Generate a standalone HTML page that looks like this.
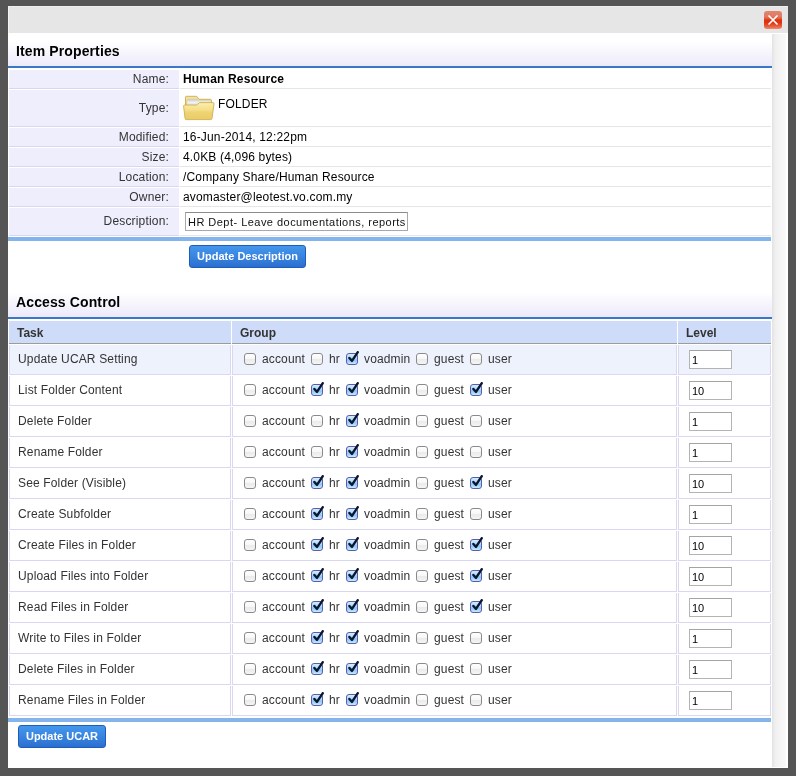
<!DOCTYPE html>
<html><head><meta charset="utf-8">
<style>
html,body{margin:0;padding:0}
body>div,body>svg{will-change:transform}
body{width:796px;height:776px;background:#555;position:relative;overflow:hidden;font-family:"Liberation Sans",sans-serif;font-size:12px}
div{position:absolute;box-sizing:border-box}
.dlg{left:8px;top:6px;width:780px;height:762px;background:#fff}
.topbar{left:8px;top:6px;width:780px;height:27px;background:#e6e6e6;border-top:1px solid #efefef;border-left:1px solid #f4f4f4}
.close{left:764px;top:11px;width:18px;height:18px;border-radius:3px;background:linear-gradient(#e4846c 0%,#de7c64 30%,#e25a3c 42%,#e0300f 50%,#de3514 65%,#e65f3f 85%,#ee8a6e 100%)}
.scroll{left:772px;top:34px;width:15px;height:733px;background:linear-gradient(to right,#e2e2e2,#efefef 20%,#f6f6f6 60%,#f9f9f9 93%,#fff 93%)}
.sechead{left:8px;width:764px;height:33px;background:linear-gradient(#fff 0%,#fff 25%,#eceafa 100%)}
.sechead span{position:absolute;left:8px;font-weight:bold;font-size:14px;color:#000;line-height:16px;letter-spacing:0.12px}
.blue{left:8px;width:764px;height:2px;background:#3a77c6}
.lblue{left:8px;width:763px;height:4px;background:#85b4ec}
.plab{left:9px;width:170px;background:#efeefc;border-bottom:1px solid #d9d6ef;text-align:right;padding-right:10px;color:#333}
.pval{left:180px;width:591px;background:#fff;border-bottom:1px solid #e6e6e6;color:#000;padding-left:3px}
.plab span,.pval span{position:absolute;line-height:14px;letter-spacing:0.17px;white-space:nowrap}
.btn{height:23px;border:1px solid #1f5cb8;border-radius:3px;background:linear-gradient(#4397ec 0%,#3a86e2 45%,#2b6fd0 100%);color:#fff;font-weight:bold;font-size:11px;line-height:21px;text-align:center}
.th{top:321px;height:23px;background:#cfdcf9;border-bottom:1px solid #9c9c9c;font-weight:bold;color:#333}
.th span{position:absolute;left:8px;top:5px;line-height:14px}
.cell{height:30px;border:1px solid #dad8f0;border-top:none}
.t{line-height:14px;color:#333;white-space:nowrap;letter-spacing:0.15px}
.cb{position:absolute}
.lvl{width:43px;height:19px;border:1px solid #b4b4b4;border-top-color:#a4a4a4;background:#fff;color:#000;padding-left:2px;padding-top:3px;line-height:13px;font-size:11px}
.inp{left:185px;top:212px;width:223px;height:19px;border:1px solid #a8a8a8;border-top-color:#8c8c8c;background:#fff;padding-left:2px;padding-top:3px;line-height:13px;font-size:11px;letter-spacing:0.47px;white-space:nowrap;overflow:hidden;color:#111}
</style></head><body>
<svg width="0" height="0" style="position:absolute">
<defs>
<linearGradient id="gu" x1="0" y1="0" x2="0" y2="1"><stop offset="0" stop-color="#fff"/><stop offset="0.45" stop-color="#f8f8f8"/><stop offset="0.55" stop-color="#ebebeb"/><stop offset="1" stop-color="#f6f6f6"/></linearGradient>
<linearGradient id="gc" x1="0" y1="0" x2="0" y2="1"><stop offset="0" stop-color="#d6f0ff"/><stop offset="0.45" stop-color="#a8d8fb"/><stop offset="0.6" stop-color="#8cc6f6"/><stop offset="1" stop-color="#cdf0ff"/></linearGradient>
<g id="unchk"><rect x="1.5" y="1.5" width="11" height="11" rx="2.5" fill="url(#gu)" stroke="#8a8a8a" stroke-width="1"/></g>
<g id="chk"><rect x="1.5" y="1.5" width="11" height="11" rx="2.5" fill="url(#gc)" stroke="#5c5cae" stroke-width="1"/><path d="M4.4 6 L7 8.9 L12.8 0.2" fill="none" stroke="#0b1630" stroke-width="2.4" stroke-linecap="round" stroke-linejoin="round"/></g>
</defs></svg>
<div class="dlg"></div>
<div class="topbar"></div>
<div class="close"><svg width="18" height="18" style="position:absolute;left:0;top:0"><path d="M5 5 L13 13 M13 5 L5 13" stroke="#fff" stroke-width="1.7" stroke-linecap="round"/></svg></div>
<div class="scroll"></div>

<div class="sechead" style="top:33px"><span style="top:10px">Item Properties</span></div>
<div class="blue" style="top:66px"></div>

<div class="plab" style="top:70px;height:19px"><span style="right:10px;top:2px">Name:</span></div>
<div class="pval" style="top:70px;height:19px"><span style="left:3px;top:2px;font-weight:bold">Human Resource</span></div>
<div class="plab" style="top:90px;height:37px"><span style="right:10px;top:11px">Type:</span></div>
<div class="pval" style="top:90px;height:37px">
<svg style="position:absolute;left:3px;top:4px" width="34" height="30" viewBox="0 0 34 30">
<defs>
<linearGradient id="fb" x1="0" y1="0" x2="0" y2="1"><stop offset="0" stop-color="#f6e69c"/><stop offset="1" stop-color="#e2c35a"/></linearGradient>
<linearGradient id="ff" x1="0" y1="0" x2="0" y2="1"><stop offset="0" stop-color="#fbefb0"/><stop offset="0.45" stop-color="#f4de86"/><stop offset="0.55" stop-color="#efd474"/><stop offset="1" stop-color="#e9cc66"/></linearGradient>
<linearGradient id="fp" x1="0" y1="0" x2="0" y2="1"><stop offset="0" stop-color="#c8c8c8"/><stop offset="0.5" stop-color="#f2f2f2"/><stop offset="1" stop-color="#d8d8d8"/></linearGradient>
</defs>
<path d="M2.5 3.2 Q2.5 2.3 3.5 2.3 L13.6 2.3 L16.1 5.3 L27.2 5.3 Q28.5 5.3 28.5 6.5 L28.5 14 L2.5 14 Z" fill="url(#fb)" stroke="#cdaa52" stroke-width="0.9"/>
<path d="M4.3 5 L13.8 5 L15.8 6.4 L27.9 6.4 L27.9 12 L4.3 12 Z" fill="url(#fp)"/>
<path d="M1.6 11 L13.6 11 L16.6 8.6 L30.2 8.6 Q31.2 8.6 31 9.8 L29 24.6 Q28.8 25.6 27.8 25.6 L3 25.6 Q2.2 25.6 2.1 24.6 L0.6 12.2 Q0.5 11 1.6 11 Z" fill="url(#ff)" stroke="#cfae58" stroke-width="0.9"/>
</svg>
<span style="left:38px;top:7px">FOLDER</span></div>
<div class="plab" style="top:128px;height:19px"><span style="right:10px;top:2px">Modified:</span></div>
<div class="pval" style="top:128px;height:19px"><span style="left:3px;top:2px">16-Jun-2014, 12:22pm</span></div>
<div class="plab" style="top:148px;height:19px"><span style="right:10px;top:2px">Size:</span></div>
<div class="pval" style="top:148px;height:19px"><span style="left:3px;top:2px">4.0KB (4,096 bytes)</span></div>
<div class="plab" style="top:168px;height:19px"><span style="right:10px;top:2px">Location:</span></div>
<div class="pval" style="top:168px;height:19px"><span style="left:3px;top:2px">/Company Share/Human Resource</span></div>
<div class="plab" style="top:188px;height:19px"><span style="right:10px;top:2px">Owner:</span></div>
<div class="pval" style="top:188px;height:19px"><span style="left:3px;top:2px">avomaster@leotest.vo.com.my</span></div>
<div class="plab" style="top:208px;height:28px"><span style="right:10px;top:6px">Description:</span></div>
<div class="pval" style="top:208px;height:28px"></div>
<div class="inp">HR Dept- Leave documentations, reports</div>
<div class="lblue" style="top:237px"></div>
<div class="btn" style="left:189px;top:245px;width:117px">Update Description</div>

<div class="sechead" style="top:284px"><span style="top:10px">Access Control</span></div>
<div class="blue" style="top:317px"></div>
<div class="th" style="left:9px;width:222px"><span>Task</span></div>
<div class="th" style="left:232px;width:445px"><span>Group</span></div>
<div class="th" style="left:678px;width:93px"><span>Level</span></div>
<div class="cell" style="left:9px;top:345px;width:222px;background:#eef2fd"></div>
<div class="cell" style="left:232px;top:345px;width:445px;background:#eef2fd"></div>
<div class="cell" style="left:678px;top:345px;width:93px;background:#eef2fd"></div>
<div class="t" style="left:18px;top:352px">Update UCAR Setting</div>
<svg class="cb" style="left:243px;top:352px" width="14" height="14" viewBox="0 0 14 14"><use href="#unchk"/></svg>
<div class="t" style="left:262px;top:352px">account</div>
<svg class="cb" style="left:310px;top:352px" width="14" height="14" viewBox="0 0 14 14"><use href="#unchk"/></svg>
<div class="t" style="left:329px;top:352px">hr</div>
<svg class="cb" style="left:345px;top:352px" width="14" height="14" viewBox="0 0 14 14" overflow="visible"><use href="#chk"/></svg>
<div class="t" style="left:364px;top:352px">voadmin</div>
<svg class="cb" style="left:415px;top:352px" width="14" height="14" viewBox="0 0 14 14"><use href="#unchk"/></svg>
<div class="t" style="left:434px;top:352px">guest</div>
<svg class="cb" style="left:469px;top:352px" width="14" height="14" viewBox="0 0 14 14"><use href="#unchk"/></svg>
<div class="t" style="left:488px;top:352px">user</div>
<div class="lvl" style="left:689px;top:350px">1</div>
<div class="cell" style="left:9px;top:376px;width:222px;background:#fff"></div>
<div class="cell" style="left:232px;top:376px;width:445px;background:#fff"></div>
<div class="cell" style="left:678px;top:376px;width:93px;background:#fff"></div>
<div class="t" style="left:18px;top:383px">List Folder Content</div>
<svg class="cb" style="left:243px;top:383px" width="14" height="14" viewBox="0 0 14 14"><use href="#unchk"/></svg>
<div class="t" style="left:262px;top:383px">account</div>
<svg class="cb" style="left:310px;top:383px" width="14" height="14" viewBox="0 0 14 14" overflow="visible"><use href="#chk"/></svg>
<div class="t" style="left:329px;top:383px">hr</div>
<svg class="cb" style="left:345px;top:383px" width="14" height="14" viewBox="0 0 14 14" overflow="visible"><use href="#chk"/></svg>
<div class="t" style="left:364px;top:383px">voadmin</div>
<svg class="cb" style="left:415px;top:383px" width="14" height="14" viewBox="0 0 14 14"><use href="#unchk"/></svg>
<div class="t" style="left:434px;top:383px">guest</div>
<svg class="cb" style="left:469px;top:383px" width="14" height="14" viewBox="0 0 14 14" overflow="visible"><use href="#chk"/></svg>
<div class="t" style="left:488px;top:383px">user</div>
<div class="lvl" style="left:689px;top:381px">10</div>
<div class="cell" style="left:9px;top:407px;width:222px;background:#fff"></div>
<div class="cell" style="left:232px;top:407px;width:445px;background:#fff"></div>
<div class="cell" style="left:678px;top:407px;width:93px;background:#fff"></div>
<div class="t" style="left:18px;top:414px">Delete Folder</div>
<svg class="cb" style="left:243px;top:414px" width="14" height="14" viewBox="0 0 14 14"><use href="#unchk"/></svg>
<div class="t" style="left:262px;top:414px">account</div>
<svg class="cb" style="left:310px;top:414px" width="14" height="14" viewBox="0 0 14 14"><use href="#unchk"/></svg>
<div class="t" style="left:329px;top:414px">hr</div>
<svg class="cb" style="left:345px;top:414px" width="14" height="14" viewBox="0 0 14 14" overflow="visible"><use href="#chk"/></svg>
<div class="t" style="left:364px;top:414px">voadmin</div>
<svg class="cb" style="left:415px;top:414px" width="14" height="14" viewBox="0 0 14 14"><use href="#unchk"/></svg>
<div class="t" style="left:434px;top:414px">guest</div>
<svg class="cb" style="left:469px;top:414px" width="14" height="14" viewBox="0 0 14 14"><use href="#unchk"/></svg>
<div class="t" style="left:488px;top:414px">user</div>
<div class="lvl" style="left:689px;top:412px">1</div>
<div class="cell" style="left:9px;top:438px;width:222px;background:#fff"></div>
<div class="cell" style="left:232px;top:438px;width:445px;background:#fff"></div>
<div class="cell" style="left:678px;top:438px;width:93px;background:#fff"></div>
<div class="t" style="left:18px;top:445px">Rename Folder</div>
<svg class="cb" style="left:243px;top:445px" width="14" height="14" viewBox="0 0 14 14"><use href="#unchk"/></svg>
<div class="t" style="left:262px;top:445px">account</div>
<svg class="cb" style="left:310px;top:445px" width="14" height="14" viewBox="0 0 14 14"><use href="#unchk"/></svg>
<div class="t" style="left:329px;top:445px">hr</div>
<svg class="cb" style="left:345px;top:445px" width="14" height="14" viewBox="0 0 14 14" overflow="visible"><use href="#chk"/></svg>
<div class="t" style="left:364px;top:445px">voadmin</div>
<svg class="cb" style="left:415px;top:445px" width="14" height="14" viewBox="0 0 14 14"><use href="#unchk"/></svg>
<div class="t" style="left:434px;top:445px">guest</div>
<svg class="cb" style="left:469px;top:445px" width="14" height="14" viewBox="0 0 14 14"><use href="#unchk"/></svg>
<div class="t" style="left:488px;top:445px">user</div>
<div class="lvl" style="left:689px;top:443px">1</div>
<div class="cell" style="left:9px;top:469px;width:222px;background:#fff"></div>
<div class="cell" style="left:232px;top:469px;width:445px;background:#fff"></div>
<div class="cell" style="left:678px;top:469px;width:93px;background:#fff"></div>
<div class="t" style="left:18px;top:476px">See Folder (Visible)</div>
<svg class="cb" style="left:243px;top:476px" width="14" height="14" viewBox="0 0 14 14"><use href="#unchk"/></svg>
<div class="t" style="left:262px;top:476px">account</div>
<svg class="cb" style="left:310px;top:476px" width="14" height="14" viewBox="0 0 14 14" overflow="visible"><use href="#chk"/></svg>
<div class="t" style="left:329px;top:476px">hr</div>
<svg class="cb" style="left:345px;top:476px" width="14" height="14" viewBox="0 0 14 14" overflow="visible"><use href="#chk"/></svg>
<div class="t" style="left:364px;top:476px">voadmin</div>
<svg class="cb" style="left:415px;top:476px" width="14" height="14" viewBox="0 0 14 14"><use href="#unchk"/></svg>
<div class="t" style="left:434px;top:476px">guest</div>
<svg class="cb" style="left:469px;top:476px" width="14" height="14" viewBox="0 0 14 14" overflow="visible"><use href="#chk"/></svg>
<div class="t" style="left:488px;top:476px">user</div>
<div class="lvl" style="left:689px;top:474px">10</div>
<div class="cell" style="left:9px;top:500px;width:222px;background:#fff"></div>
<div class="cell" style="left:232px;top:500px;width:445px;background:#fff"></div>
<div class="cell" style="left:678px;top:500px;width:93px;background:#fff"></div>
<div class="t" style="left:18px;top:507px">Create Subfolder</div>
<svg class="cb" style="left:243px;top:507px" width="14" height="14" viewBox="0 0 14 14"><use href="#unchk"/></svg>
<div class="t" style="left:262px;top:507px">account</div>
<svg class="cb" style="left:310px;top:507px" width="14" height="14" viewBox="0 0 14 14" overflow="visible"><use href="#chk"/></svg>
<div class="t" style="left:329px;top:507px">hr</div>
<svg class="cb" style="left:345px;top:507px" width="14" height="14" viewBox="0 0 14 14" overflow="visible"><use href="#chk"/></svg>
<div class="t" style="left:364px;top:507px">voadmin</div>
<svg class="cb" style="left:415px;top:507px" width="14" height="14" viewBox="0 0 14 14"><use href="#unchk"/></svg>
<div class="t" style="left:434px;top:507px">guest</div>
<svg class="cb" style="left:469px;top:507px" width="14" height="14" viewBox="0 0 14 14"><use href="#unchk"/></svg>
<div class="t" style="left:488px;top:507px">user</div>
<div class="lvl" style="left:689px;top:505px">1</div>
<div class="cell" style="left:9px;top:531px;width:222px;background:#fff"></div>
<div class="cell" style="left:232px;top:531px;width:445px;background:#fff"></div>
<div class="cell" style="left:678px;top:531px;width:93px;background:#fff"></div>
<div class="t" style="left:18px;top:538px">Create Files in Folder</div>
<svg class="cb" style="left:243px;top:538px" width="14" height="14" viewBox="0 0 14 14"><use href="#unchk"/></svg>
<div class="t" style="left:262px;top:538px">account</div>
<svg class="cb" style="left:310px;top:538px" width="14" height="14" viewBox="0 0 14 14" overflow="visible"><use href="#chk"/></svg>
<div class="t" style="left:329px;top:538px">hr</div>
<svg class="cb" style="left:345px;top:538px" width="14" height="14" viewBox="0 0 14 14" overflow="visible"><use href="#chk"/></svg>
<div class="t" style="left:364px;top:538px">voadmin</div>
<svg class="cb" style="left:415px;top:538px" width="14" height="14" viewBox="0 0 14 14"><use href="#unchk"/></svg>
<div class="t" style="left:434px;top:538px">guest</div>
<svg class="cb" style="left:469px;top:538px" width="14" height="14" viewBox="0 0 14 14" overflow="visible"><use href="#chk"/></svg>
<div class="t" style="left:488px;top:538px">user</div>
<div class="lvl" style="left:689px;top:536px">10</div>
<div class="cell" style="left:9px;top:562px;width:222px;background:#fff"></div>
<div class="cell" style="left:232px;top:562px;width:445px;background:#fff"></div>
<div class="cell" style="left:678px;top:562px;width:93px;background:#fff"></div>
<div class="t" style="left:18px;top:569px">Upload Files into Folder</div>
<svg class="cb" style="left:243px;top:569px" width="14" height="14" viewBox="0 0 14 14"><use href="#unchk"/></svg>
<div class="t" style="left:262px;top:569px">account</div>
<svg class="cb" style="left:310px;top:569px" width="14" height="14" viewBox="0 0 14 14" overflow="visible"><use href="#chk"/></svg>
<div class="t" style="left:329px;top:569px">hr</div>
<svg class="cb" style="left:345px;top:569px" width="14" height="14" viewBox="0 0 14 14" overflow="visible"><use href="#chk"/></svg>
<div class="t" style="left:364px;top:569px">voadmin</div>
<svg class="cb" style="left:415px;top:569px" width="14" height="14" viewBox="0 0 14 14"><use href="#unchk"/></svg>
<div class="t" style="left:434px;top:569px">guest</div>
<svg class="cb" style="left:469px;top:569px" width="14" height="14" viewBox="0 0 14 14" overflow="visible"><use href="#chk"/></svg>
<div class="t" style="left:488px;top:569px">user</div>
<div class="lvl" style="left:689px;top:567px">10</div>
<div class="cell" style="left:9px;top:593px;width:222px;background:#fff"></div>
<div class="cell" style="left:232px;top:593px;width:445px;background:#fff"></div>
<div class="cell" style="left:678px;top:593px;width:93px;background:#fff"></div>
<div class="t" style="left:18px;top:600px">Read Files in Folder</div>
<svg class="cb" style="left:243px;top:600px" width="14" height="14" viewBox="0 0 14 14"><use href="#unchk"/></svg>
<div class="t" style="left:262px;top:600px">account</div>
<svg class="cb" style="left:310px;top:600px" width="14" height="14" viewBox="0 0 14 14" overflow="visible"><use href="#chk"/></svg>
<div class="t" style="left:329px;top:600px">hr</div>
<svg class="cb" style="left:345px;top:600px" width="14" height="14" viewBox="0 0 14 14" overflow="visible"><use href="#chk"/></svg>
<div class="t" style="left:364px;top:600px">voadmin</div>
<svg class="cb" style="left:415px;top:600px" width="14" height="14" viewBox="0 0 14 14"><use href="#unchk"/></svg>
<div class="t" style="left:434px;top:600px">guest</div>
<svg class="cb" style="left:469px;top:600px" width="14" height="14" viewBox="0 0 14 14" overflow="visible"><use href="#chk"/></svg>
<div class="t" style="left:488px;top:600px">user</div>
<div class="lvl" style="left:689px;top:598px">10</div>
<div class="cell" style="left:9px;top:624px;width:222px;background:#fff"></div>
<div class="cell" style="left:232px;top:624px;width:445px;background:#fff"></div>
<div class="cell" style="left:678px;top:624px;width:93px;background:#fff"></div>
<div class="t" style="left:18px;top:631px">Write to Files in Folder</div>
<svg class="cb" style="left:243px;top:631px" width="14" height="14" viewBox="0 0 14 14"><use href="#unchk"/></svg>
<div class="t" style="left:262px;top:631px">account</div>
<svg class="cb" style="left:310px;top:631px" width="14" height="14" viewBox="0 0 14 14" overflow="visible"><use href="#chk"/></svg>
<div class="t" style="left:329px;top:631px">hr</div>
<svg class="cb" style="left:345px;top:631px" width="14" height="14" viewBox="0 0 14 14" overflow="visible"><use href="#chk"/></svg>
<div class="t" style="left:364px;top:631px">voadmin</div>
<svg class="cb" style="left:415px;top:631px" width="14" height="14" viewBox="0 0 14 14"><use href="#unchk"/></svg>
<div class="t" style="left:434px;top:631px">guest</div>
<svg class="cb" style="left:469px;top:631px" width="14" height="14" viewBox="0 0 14 14"><use href="#unchk"/></svg>
<div class="t" style="left:488px;top:631px">user</div>
<div class="lvl" style="left:689px;top:629px">1</div>
<div class="cell" style="left:9px;top:655px;width:222px;background:#fff"></div>
<div class="cell" style="left:232px;top:655px;width:445px;background:#fff"></div>
<div class="cell" style="left:678px;top:655px;width:93px;background:#fff"></div>
<div class="t" style="left:18px;top:662px">Delete Files in Folder</div>
<svg class="cb" style="left:243px;top:662px" width="14" height="14" viewBox="0 0 14 14"><use href="#unchk"/></svg>
<div class="t" style="left:262px;top:662px">account</div>
<svg class="cb" style="left:310px;top:662px" width="14" height="14" viewBox="0 0 14 14" overflow="visible"><use href="#chk"/></svg>
<div class="t" style="left:329px;top:662px">hr</div>
<svg class="cb" style="left:345px;top:662px" width="14" height="14" viewBox="0 0 14 14" overflow="visible"><use href="#chk"/></svg>
<div class="t" style="left:364px;top:662px">voadmin</div>
<svg class="cb" style="left:415px;top:662px" width="14" height="14" viewBox="0 0 14 14"><use href="#unchk"/></svg>
<div class="t" style="left:434px;top:662px">guest</div>
<svg class="cb" style="left:469px;top:662px" width="14" height="14" viewBox="0 0 14 14"><use href="#unchk"/></svg>
<div class="t" style="left:488px;top:662px">user</div>
<div class="lvl" style="left:689px;top:660px">1</div>
<div class="cell" style="left:9px;top:686px;width:222px;background:#fff"></div>
<div class="cell" style="left:232px;top:686px;width:445px;background:#fff"></div>
<div class="cell" style="left:678px;top:686px;width:93px;background:#fff"></div>
<div class="t" style="left:18px;top:693px">Rename Files in Folder</div>
<svg class="cb" style="left:243px;top:693px" width="14" height="14" viewBox="0 0 14 14"><use href="#unchk"/></svg>
<div class="t" style="left:262px;top:693px">account</div>
<svg class="cb" style="left:310px;top:693px" width="14" height="14" viewBox="0 0 14 14" overflow="visible"><use href="#chk"/></svg>
<div class="t" style="left:329px;top:693px">hr</div>
<svg class="cb" style="left:345px;top:693px" width="14" height="14" viewBox="0 0 14 14" overflow="visible"><use href="#chk"/></svg>
<div class="t" style="left:364px;top:693px">voadmin</div>
<svg class="cb" style="left:415px;top:693px" width="14" height="14" viewBox="0 0 14 14"><use href="#unchk"/></svg>
<div class="t" style="left:434px;top:693px">guest</div>
<svg class="cb" style="left:469px;top:693px" width="14" height="14" viewBox="0 0 14 14"><use href="#unchk"/></svg>
<div class="t" style="left:488px;top:693px">user</div>
<div class="lvl" style="left:689px;top:691px">1</div>
<div class="lblue" style="top:718px"></div>
<div class="btn" style="left:18px;top:725px;width:88px">Update UCAR</div>
</body></html>
